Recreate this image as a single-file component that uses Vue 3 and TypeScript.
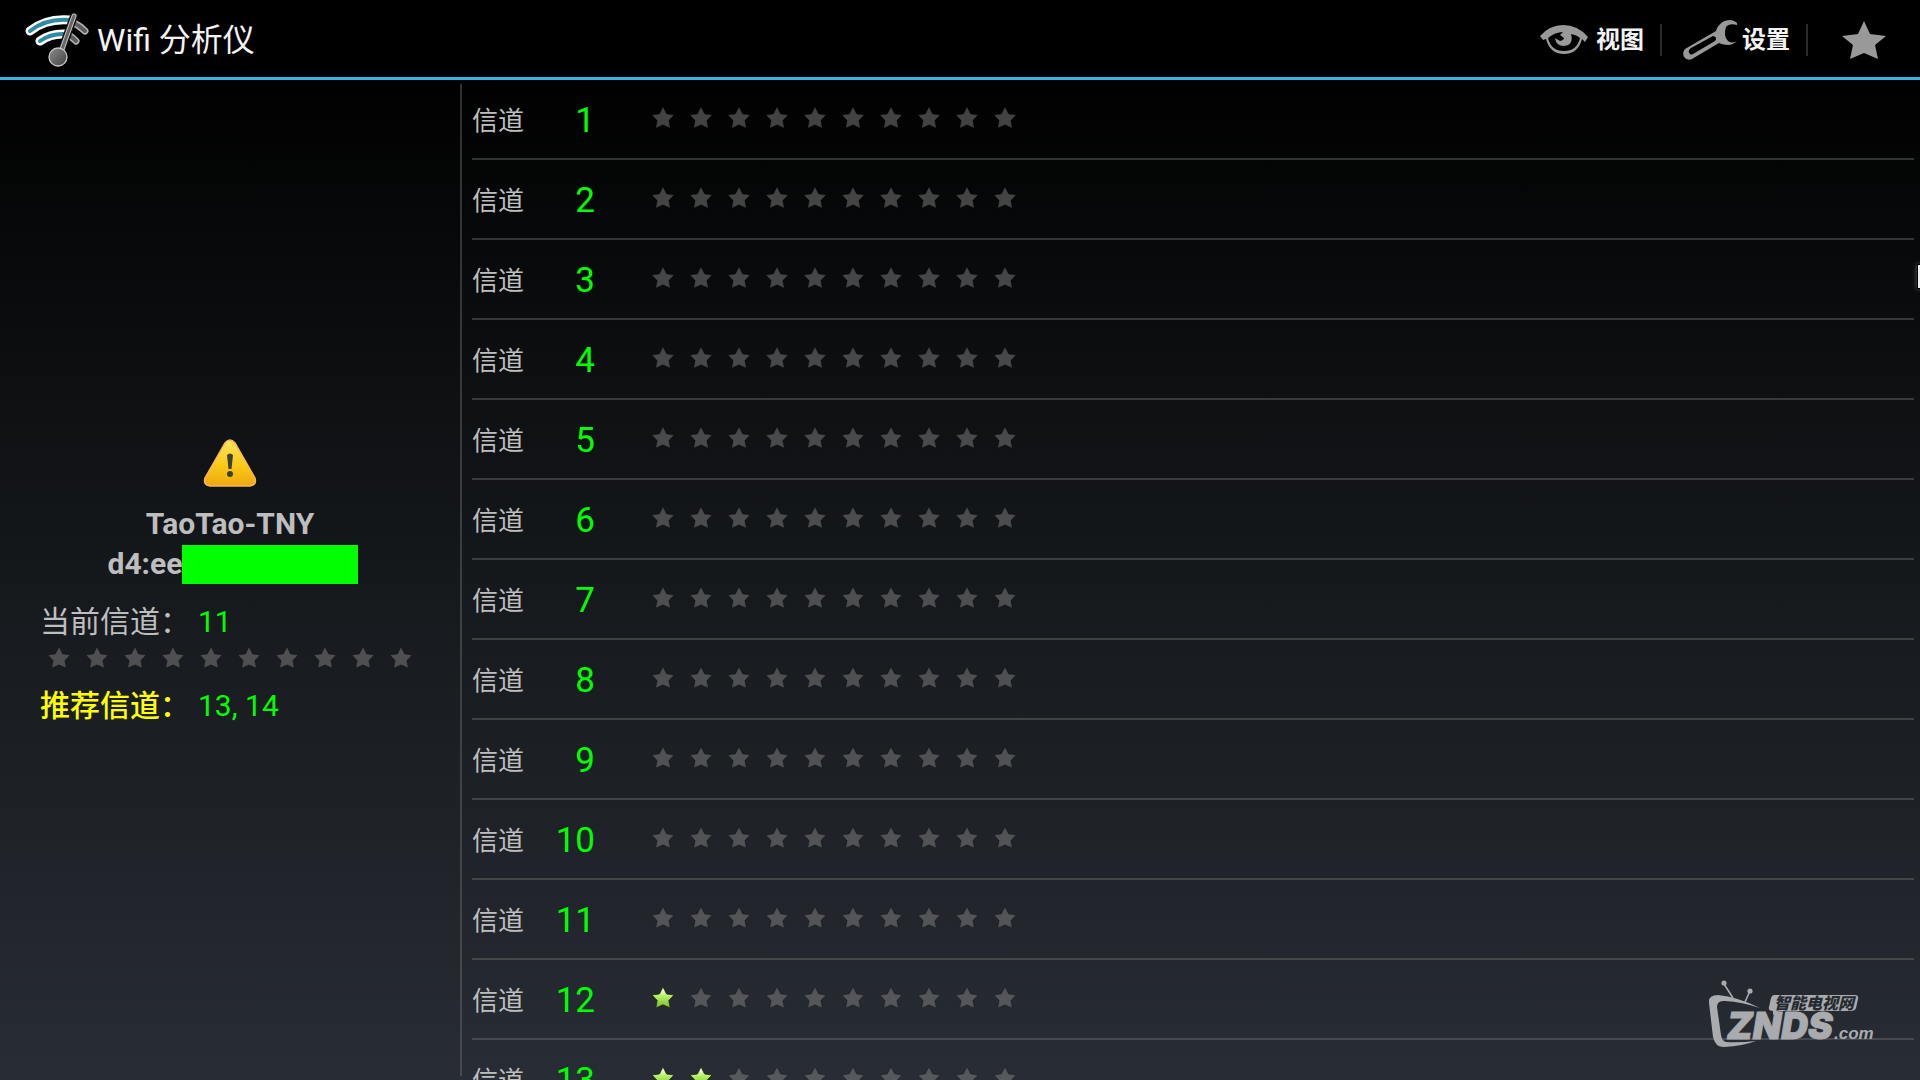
<script setup lang="ts">
interface Channel {
  id: number
  rating: number
}

const starPath = 'M12 1L15.6 8L23 9L17.8 14.5L19.2 22L12 18.8L4.8 22L6.2 14.5L1 9L8.4 8Z'
const maxStars = 10

const channels: Channel[] = Array.from({ length: 13 }, (_, i) => ({
  id: i + 1,
  rating: i + 1 === 12 ? 1 : i + 1 === 13 ? 2 : 0,
}))
</script>

<template>
  <div class="app">
    <svg class="defs" width="0" height="0" aria-hidden="true">
      <defs>
        <linearGradient id="lit" x1="0" y1="0" x2="0" y2="1">
          <stop offset="0.1" stop-color="#f4ffe4" />
          <stop offset="0.45" stop-color="#b4ee62" />
          <stop offset="1" stop-color="#74b92c" />
        </linearGradient>
      </defs>
    </svg>

    <header class="bar">
      <svg class="logo" viewBox="24 8 68 64" aria-hidden="true">
        <defs>
          <linearGradient id="ball" x1="0" y1="0" x2="1" y2="1">
            <stop offset="0" stop-color="#8c8c8c" />
            <stop offset="1" stop-color="#424242" />
          </linearGradient>
        </defs>
        <g fill="none" stroke-linecap="round">
          <path d="M74 23Q80 26 85 31M70 36Q73 38 76 41" stroke="#b4b4b4" stroke-width="7" />
          <path d="M74 23Q80 26 85 31M70 36Q73 38 76 41" stroke="#5e5e5e" stroke-width="4" />
          <path d="M30 31Q46 18 70 20M40 41Q51 33 66 34" stroke="#fff" stroke-width="9" />
          <path d="M30 31Q46 18 70 20M40 41Q51 33 66 34" stroke="#2d8ba3" stroke-width="4" />
          <path d="M74 16L61 52" stroke="#111" stroke-width="8" />
          <path d="M74 16L61 52" stroke="#ccc" stroke-width="5" />
          <path d="M74 16L61 52" stroke="#666" stroke-width="3" />
        </g>
        <circle cx="58" cy="57" r="9" fill="url(#ball)" stroke="#c8c8c8" stroke-width="1.3" />
      </svg>
      <h1 class="title">Wifi 分析仪</h1>

      <nav class="actions">
        <button type="button" class="action">
          <svg class="eye" viewBox="1540 26 48 32" aria-hidden="true">
            <path
              d="M1540 38Q1550 27 1563 27Q1578 27 1588 39L1585 44L1582 41Q1578 56 1564 56Q1550 56 1546 41L1543 42ZM1548 40Q1551 53 1564 53Q1577 53 1580 40Q1577 37 1571 36Q1574 47 1564 48Q1556 48 1555 40L1560 43Q1564 42 1564 40L1560 37L1563 34Q1555 34 1548 40Z"
              fill="#999" fill-rule="evenodd"
            />
          </svg>
          <span>视图</span>
        </button>
        <button type="button" class="action tools">
          <svg class="wrench" viewBox="1682 18 56 44" aria-hidden="true">
            <path
              d="M1716 31Q1719 21 1729 20Q1734 20 1737 23V25Q1729 23 1726 27Q1723 36 1728 41Q1732 44 1737 41Q1733 45 1728 45Q1723 45 1719 43L1692 59Q1687 61 1684 57Q1682 52 1685 49ZM1713 36L1691 48Q1687 51 1690 54Q1691 55 1693 54L1715 41Q1718 37 1713 36Z"
              fill="#999" fill-rule="evenodd"
            />
          </svg>
          <span>设置</span>
        </button>
        <button type="button" class="action favorite" aria-label="收藏">
          <svg class="bigstar" viewBox="1842 20 44 40" aria-hidden="true">
            <path
              d="M1864 21L1870 34L1886 36L1875 45L1878 59L1864 53L1850 59L1853 45L1842 36L1858 34Z"
              fill="#999"
            />
          </svg>
        </button>
      </nav>
    </header>

    <main class="body">
      <aside class="side">
        <svg class="warn" viewBox="0 0 56 50" aria-hidden="true">
          <defs>
            <linearGradient id="amber" x1="0" y1="0" x2="0" y2="1">
              <stop offset="0" stop-color="#ffe45c" />
              <stop offset="0.6" stop-color="#f7c714" />
              <stop offset="1" stop-color="#f0a810" />
            </linearGradient>
          </defs>
          <path
            d="M23 5Q28 -1 33 5L53 40Q55 47 48 48H8Q1 47 3 40Z"
            fill="url(#amber)" stroke="#f9b65a" stroke-width="1.5"
          />
          <path d="M25 17Q28 14 31 17L29.5 31H26.5Z" fill="#3a3f38" />
          <circle cx="28" cy="36" r="3" fill="#3a3f38" />
        </svg>
        <strong class="ssid">TaoTao-TNY</strong>
        <div class="mac"><strong>d4:ee</strong><span class="mask"></span></div>
        <p class="current">当前信道：<span class="value">11</span></p>
        <div class="stars" role="img" aria-label="0 / 10">
          <svg v-for="n in maxStars" :key="n" class="star" viewBox="0 0 24 24">
            <path :d="starPath" />
          </svg>
        </div>
        <p class="best">推荐信道：<span class="value">13, 14</span></p>
      </aside>

      <ul class="list">
        <li v-for="channel in channels" :key="channel.id" class="row">
          <span class="label">信道</span>
          <span class="number">{{ channel.id }}</span>
          <div class="stars" role="img" :aria-label="`${channel.rating} / 10`">
            <svg
              v-for="n in maxStars" :key="n" viewBox="0 0 24 24"
              class="star" :class="{ lit: n <= channel.rating }"
            >
              <path :d="starPath" />
            </svg>
          </div>
        </li>
      </ul>
    </main>

    <div class="thumb"></div>

    <svg class="mark" viewBox="1704 976 176 76" role="img" aria-label="智能电视网 ZNDS.com">
      <g fill="none" stroke="#a9abae" stroke-width="1.6">
        <path d="M1724 984L1733 998M1750 991L1745 1002" />
      </g>
      <circle cx="1724" cy="983" r="2.6" fill="#a9abae" />
      <circle cx="1750" cy="991" r="2.6" fill="#a9abae" />
      <path
        d="M1760 1008Q1738 997 1718 995Q1708 995 1709 1003L1713 1037Q1715 1047 1724 1047Q1743 1046 1756 1041Q1738 1043 1726 1042Q1722 1041 1721 1035L1717 1007Q1717 1000 1725 1001Q1742 1002 1760 1008Z"
        fill="#a9abae"
      />
      <path
        d="M1774 995H1855Q1859 995 1858 999L1856 1008Q1855 1011 1851 1011H1779L1773 1015V1011Q1768 1011 1769 1007L1771 998Q1772 995 1774 995Z"
        fill="#a9abae"
      />
      <text class="mark-cn" x="1774" y="1009">智能电视网</text>
      <text class="mark-name" x="1727" y="1039">ZNDS</text>
      <text class="mark-com" x="1834" y="1039">.com</text>
    </svg>
  </div>
</template>

<style>
body {
  margin: 0;
  background: #000;
}
</style>

<style scoped>
.app {
  position: relative;
  display: flex;
  flex-direction: column;
  height: 100vh;
  overflow: hidden;
  color: #bebebe;
  background: linear-gradient(#000, #000 6%, #14171a 50%, #282c34);
  font-family: Roboto, "Noto Sans CJK SC", sans-serif;
}

.defs {
  position: absolute;
}

.bar {
  display: flex;
  flex: none;
  align-items: center;
  box-sizing: border-box;
  height: 80px;
  padding: 3px 0 0 24px;
  border-bottom: 3px solid #33b5e5;
  background: #000;
}

.logo {
  width: 68px;
  height: 64px;
}

.title {
  margin: 0 0 0 5px;
  color: #f3f3f3;
  font-size: 32px;
  font-weight: 400;
  line-height: 40px;
}

.actions {
  display: flex;
  margin-left: auto;
}

.action {
  display: flex;
  align-items: center;
  gap: 8px;
  height: 32px;
  padding: 0 16px;
  border: 0;
  border-right: 2px solid #2a2a2a;
  background: none;
  color: #f3f3f3;
  font: 700 24px/32px Roboto, "Noto Sans CJK SC", sans-serif;
}

.tools {
  gap: 4px;
  padding-left: 20px;
}

.favorite {
  justify-content: center;
  width: 112px;
  border: 0;
}

.eye {
  width: 48px;
  height: 32px;
}

.wrench {
  width: 56px;
  height: 44px;
}

.bigstar {
  width: 44px;
  height: 40px;
}

.body {
  display: flex;
  flex: 1;
  min-height: 0;
}

.side {
  display: flex;
  flex: none;
  flex-direction: column;
  justify-content: center;
  box-sizing: border-box;
  width: 460px;
  padding: 4px 40px 0;
}

.warn {
  align-self: center;
  width: 56px;
  height: 50px;
}

.ssid {
  margin-top: 16px;
  text-align: center;
  font-size: 30px;
  line-height: 40px;
}

.mac {
  display: flex;
  align-items: center;
  justify-content: center;
  padding-left: 6px;
  font-size: 30px;
  line-height: 40px;
}

.mask {
  width: 176px;
  height: 39px;
  background: #0f0;
}

.current,
.best {
  margin: 18px 0 0;
  font-size: 30px;
  line-height: 40px;
}

.best {
  margin-top: 16px;
  color: #ff0;
  font-weight: 500;
}

.value {
  margin-left: 8px;
  color: #0f0;
  font-weight: 400;
}

.stars {
  display: flex;
  gap: 14px;
}

.side .stars {
  padding: 4px 0 0 7px;
}

.row .stars {
  padding-bottom: 6px;
}

.star {
  flex: none;
  width: 24px;
  height: 24px;
  overflow: visible;
  fill: #888;
  fill-opacity: 0.48;
  stroke: #000;
  stroke-opacity: 0.25;
}

.lit {
  fill: url(#lit);
  fill-opacity: 1;
  stroke: #1d2a10;
  stroke-opacity: 0.8;
}

.list {
  flex: 1;
  margin: 4px 0;
  padding: 0 6px 0 10px;
  border-left: 2px solid #78787866;
  list-style: none;
  overflow: visible;
}

.row {
  display: flex;
  align-items: center;
  box-sizing: border-box;
  height: 80px;
  padding-top: 4px;
  border-bottom: 2px solid #78787866;
}

.row:first-child {
  height: 76px;
  padding-top: 0;
}

.label {
  width: 52px;
  font-size: 26px;
  line-height: 40px;
}

.number {
  width: 71px;
  margin-right: 56px;
  color: #0f0;
  text-align: right;
  font-size: 35px;
  line-height: 40px;
}

.thumb {
  position: absolute;
  top: 265px;
  right: 0;
  width: 2px;
  height: 23px;
  background: #eee;
  box-shadow: 0 0 0 1px #000, 0 0 5px 1px #666;
}

.mark {
  position: absolute;
  right: 40px;
  bottom: 28px;
  width: 176px;
  height: 76px;
}

.mark-cn {
  fill: #262b30;
  font: italic 900 16px "Noto Sans CJK SC", sans-serif;
}

.mark-name {
  fill: #a9abae;
  stroke: #a9abae;
  stroke-width: 1px;
  font: italic 900 37px Inter, "Liberation Sans", sans-serif;
}

.mark-com {
  fill: #a9abae;
  font: italic 700 17px "Liberation Sans", sans-serif;
}
</style>
